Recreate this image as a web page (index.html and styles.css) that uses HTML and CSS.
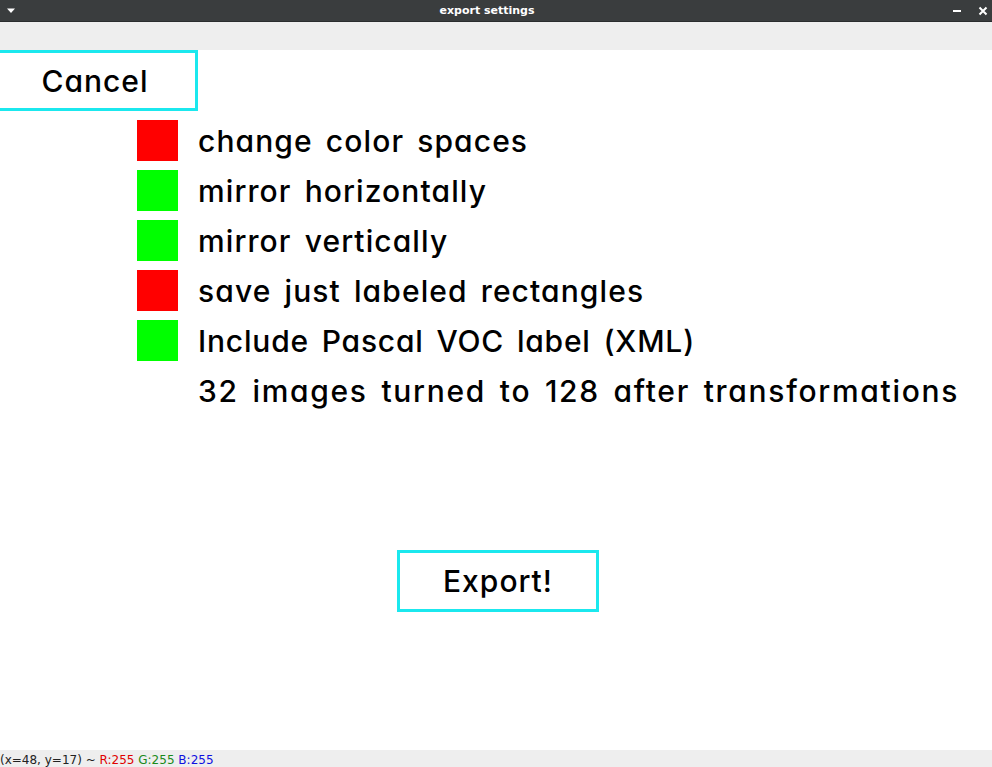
FILE: index.html
```html
<!DOCTYPE html>
<html>
<head>
<meta charset="utf-8">
<link rel="stylesheet" href="styles.css">
</head>
<body>
<div class="window">
  <div class="titlebar">
    <span class="menu-arrow"><svg width="10" height="6" viewBox="0 0 10 6"><path d="M1 0.5 L9 0.5 L5 5 Z" fill="#fff"/></svg></span>
    <span class="title">export settings</span>
    <span class="win-btns">
      <svg width="10" height="10" viewBox="0 0 10 10"><rect x="1" y="4" width="8" height="2" fill="#fff"/></svg>
      <svg width="10" height="10" viewBox="0 0 10 10"><path d="M1.5 1.5 L8.5 8.5 M8.5 1.5 L1.5 8.5" stroke="#fff" stroke-width="2"/></svg>
    </span>
  </div>
  <div class="toolbar"></div>
  <div class="canvas">
    <div class="btn cancel">Cancel</div>
    <div class="options">
      <div class="row"><span class="box red"></span><span class="label">change color spaces</span></div>
      <div class="row"><span class="box green"></span><span class="label">mirror horizontally</span></div>
      <div class="row"><span class="box green"></span><span class="label">mirror vertically</span></div>
      <div class="row"><span class="box red"></span><span class="label">save just labeled rectangles</span></div>
      <div class="row"><span class="box green"></span><span class="label narrow">Include Pascal VOC label (XML)</span></div>
      <div class="row"><span class="box none"></span><span class="label wide">32 images turned to 128 after transformations</span></div>
    </div>
    <div class="export-wrap"><div class="btn export">Export!</div></div>
  </div>
  <div class="statusbar">(x=48, y=17) ~ <span class="r">R:255</span> <span class="g">G:255</span> <span class="b">B:255</span></div>
</div>
</body>
</html>
```

FILE: styles.css
```css
html, body {
  margin: 0;
  padding: 0;
  background: #ffffff;
}
.window {
  width: 992px;
  height: 767px;
  display: flex;
  flex-direction: column;
  overflow: hidden;
}
.titlebar {
  height: 21px;
  background: #3a3d3e;
  border-bottom: 1px solid #2a2c2d;
  display: flex;
  align-items: center;
  justify-content: space-between;
  color: #ffffff;
  font-family: "DejaVu Sans", sans-serif;
  font-size: 11px;
  font-weight: bold;
  padding: 0 4px 0 6px;
}
.menu-arrow { display: flex; width: 20px; }
.win-btns { display: flex; gap: 16px; width: 40px; justify-content: flex-end; }
.toolbar {
  height: 28px;
  background: #eeeeee;
}
.canvas {
  flex: 1;
  background: #ffffff;
  font-family: "Inter", "DejaVu Sans", sans-serif;
  font-feature-settings: "cv11";
  font-weight: 500;
  color: #000;
}
.btn {
  box-sizing: border-box;
  border: 3px solid #1be8ee;
  display: flex;
  align-items: center;
  justify-content: center;
  font-size: 30px;
  letter-spacing: 1px;
}
.cancel {
  width: 202px;
  height: 61px;
  margin-left: -4px;
  padding-right: 4px;
}
.options {
  display: flex;
  flex-direction: column;
  gap: 9px;
  margin-top: 9px;
  padding-left: 137px;
}
.row {
  display: flex;
  align-items: center;
  gap: 20px;
  height: 41px;
}
.box {
  width: 41px;
  height: 41px;
  flex: none;
}
.red { background: #ff0000; }
.green { background: #00ff00; }
.label {
  font-size: 30px;
  letter-spacing: 1.1px;
  word-spacing: 4px;
  white-space: nowrap;
}
.label.narrow {
  letter-spacing: 0.8px;
}
.label.wide {
  letter-spacing: 1.7px;
}
.export-wrap {
  margin-top: 139px;
  padding-left: 397px;
}
.export {
  width: 202px;
  height: 62px;
}
.statusbar {
  height: 17px;
  background: #eeeeee;
  font-family: "DejaVu Sans", sans-serif;
  font-size: 12px;
  line-height: 20px;
  color: #222;
  white-space: nowrap;
}
.statusbar .r { color: #e00000; }
.statusbar .g { color: #1a8a1a; }
.statusbar .b { color: #1010e0; }
```
